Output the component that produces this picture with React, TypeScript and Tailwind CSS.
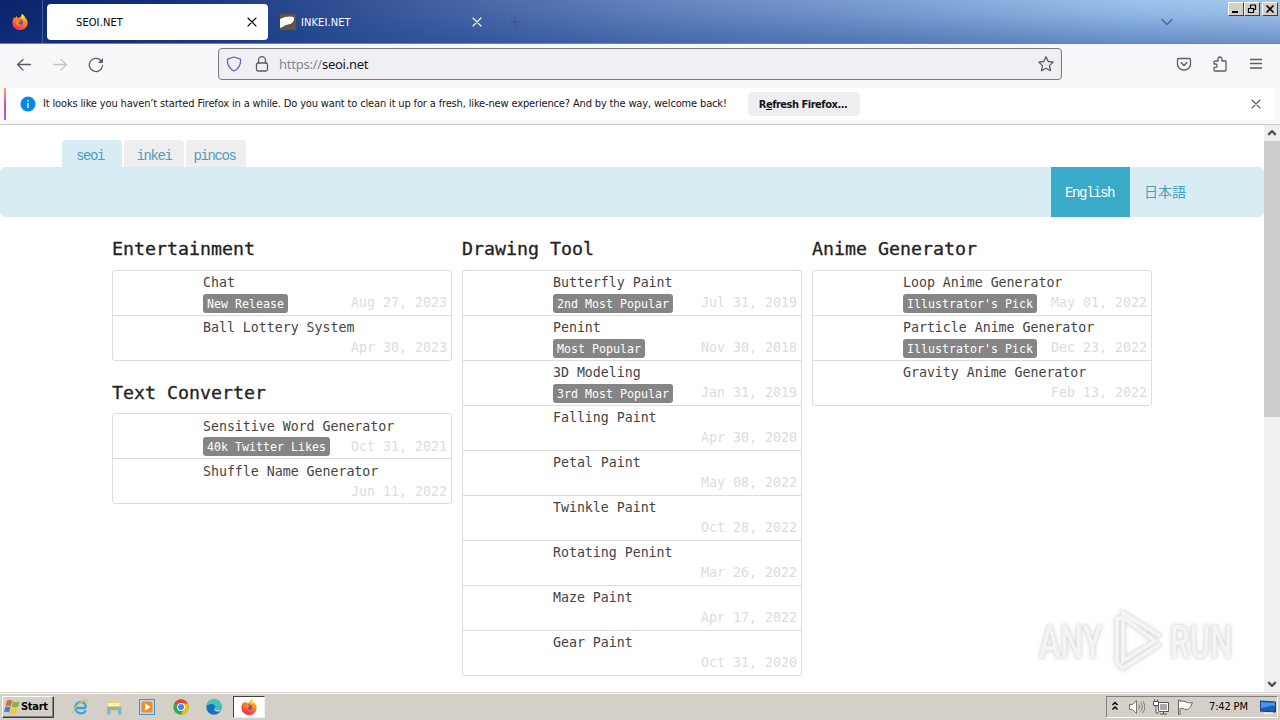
import type { ReactNode } from "react";

type Item = { title: string; date: string; badge?: string };
type Group = { name: string; items: Item[] };

const columns: Group[][] = [
  [
    {
      name: "Entertainment",
      items: [
        { title: "Chat", date: "Aug 27, 2023", badge: "New Release" },
        { title: "Ball Lottery System", date: "Apr 30, 2023" },
      ],
    },
    {
      name: "Text Converter",
      items: [
        { title: "Sensitive Word Generator", date: "Oct 31, 2021", badge: "40k Twitter Likes" },
        { title: "Shuffle Name Generator", date: "Jun 11, 2022" },
      ],
    },
  ],
  [
    {
      name: "Drawing Tool",
      items: [
        { title: "Butterfly Paint", date: "Jul 31, 2019", badge: "2nd Most Popular" },
        { title: "Penint", date: "Nov 30, 2018", badge: "Most Popular" },
        { title: "3D Modeling", date: "Jan 31, 2019", badge: "3rd Most Popular" },
        { title: "Falling Paint", date: "Apr 30, 2020" },
        { title: "Petal Paint", date: "May 08, 2022" },
        { title: "Twinkle Paint", date: "Oct 28, 2022" },
        { title: "Rotating Penint", date: "Mar 26, 2022" },
        { title: "Maze Paint", date: "Apr 17, 2022" },
        { title: "Gear Paint", date: "Oct 31, 2020" },
      ],
    },
  ],
  [
    {
      name: "Anime Generator",
      items: [
        { title: "Loop Anime Generator", date: "May 01, 2022", badge: "Illustrator's Pick" },
        { title: "Particle Anime Generator", date: "Dec 23, 2022", badge: "Illustrator's Pick" },
        { title: "Gravity Anime Generator", date: "Feb 13, 2022" },
      ],
    },
  ],
];

const Icon = ({ children, className = "" }: { children: ReactNode; className?: string }) => (
  <svg
    viewBox="0 0 16 16"
    className={`w-4 h-4 shrink-0 ${className}`}
    fill="none"
    stroke="currentColor"
    strokeWidth="1.3"
    strokeLinecap="round"
    strokeLinejoin="round"
  >
    {children}
  </svg>
);

const CloseIcon = ({ className }: { className?: string }) => (
  <Icon className={className}>
    <path d="M4 4l8 8M12 4l-8 8" strokeWidth="1.100" />
  </Icon>
);

const FirefoxLogo = () => (
  <svg viewBox="0 0 16 16" className="w-4 h-4 shrink-0">
    <defs>
      <linearGradient id="fox" x1="0.8" y1="0" x2="0.3" y2="1">
        <stop offset="0" stopColor="#ffe226" />
        <stop offset="0.4" stopColor="#ff8a16" />
        <stop offset="1" stopColor="#f5246a" />
      </linearGradient>
    </defs>
    <path
      d="M10 0c2 1.500 2.500 2.600 3 3.700 1 .5 2.700 2.300 2.700 5A7.600 7.300 0 0 1 .4 8.700C.4 6.300 1.300 4.500 2.500 3l.5 1.300C3.500 3.200 4.200 2.400 5 2c0 .8.300 1.600.8 2C7.500 3.800 9.600 2.800 10 0z"
      fill="url(#fox)"
    />
    <circle cx="8.200" cy="8.300" r="2.700" fill="#7a45c0" />
    <path d="M3.500 5.500c1.500-.8 3-.3 4 .7 1.300.1 1.700.8 1.200 1.300-.8.600-2 .4-2.200 1.500 0 1 1.200 1.800 2.600 1.500-1.500 1.500-4.600 1-5.400-1.400z" fill="#ff8a16" />
    <path d="M10 0c2 1.500 2.500 2.600 3 3.700l-2.500 1.600C9.500 4 9.500 2 10 0z" fill="#ffd936" />
  </svg>
);

const CaptionButton = ({ children }: { children: ReactNode }) => (
  <div className="w-4 h-[14px] bg-[#d4d0c8] border border-t-white border-l-white border-r-[#404040] border-b-[#404040]">
    <svg viewBox="0 0 14 12" className="w-[14px] h-3" fill="none" stroke="#000">
      {children}
    </svg>
  </div>
);

const TitleBar = () => (
  <div className="relative h-11 flex items-center border-b border-[#7c7f8e] text-[11px] font-['DejaVu_Sans_Condensed','DejaVu_Sans',sans-serif] bg-[linear-gradient(to_bottom,transparent_0%,rgba(20,56,136,0.08)_30%,rgba(20,60,140,0.4)_100%),linear-gradient(97deg,#0a246a_0%,#12307a_12%,#3d5d9e_32%,#6282bc_50%,#7ea1d4_70%,#9bc2ec_88%,#a6caf0_100%)]">
    <div className="w-[43px] h-full flex items-center pl-3 border-r border-[#42588f]">
      <FirefoxLogo />
    </div>
    <div className="ml-1 w-[221px] h-9 bg-white rounded flex items-center pl-[29px] pr-2 text-black">
      <span className="grow pt-[3px] tracking-[0.1px]">SEOI.NET</span>
      <CloseIcon />
    </div>
    <div className="ml-3 w-[205px] flex items-center text-white">
      <svg viewBox="0 0 16 16" className="w-4 h-4 mr-[5px]">
        <path d="M0 0h16v16H0z" fill="#66543f" />
        <path d="M0 5c5-3 11-3 13.500-2C15 5 13.500 9 10 10c-3 1-5 .5-6.500 2.500L0 14z" fill="#fff" />
      </svg>
      <span className="grow pt-[3px] tracking-[0.1px]">INKEI.NET</span>
      <CloseIcon />
    </div>
    <Icon className="ml-[22px] text-[#425071] opacity-70">
      <path d="M8 4v8M4 8h8" />
    </Icon>
    <Icon className="ml-auto mr-[105px] text-[#4c6798]">
      <path d="M3 5.500l5 5 5-5" strokeWidth="1.600" />
    </Icon>
    <div className="absolute top-[2px] right-[2px] flex">
      <CaptionButton>
        <path d="M3 9h6" strokeWidth="2" />
      </CaptionButton>
      <CaptionButton>
        <path d="M5 2h6M5.500 2v3M10.500 2v5M3 5.500h6M3.500 5v5M8.500 5v5M3 9.500h6M9 6.500h2" strokeWidth="1.200" />
      </CaptionButton>
      <div className="ml-[2px]">
        <CaptionButton>
          <path d="M3.500 2.500l7 7M10.500 2.500l-7 7" strokeWidth="1.600" />
        </CaptionButton>
      </div>
    </div>
  </div>
);

const ToolBar = () => (
  <div className="h-11 bg-[#f8f8fb] flex items-start text-[#5b5b66]">
    <div className="flex gap-5 pt-[13px] pl-4 w-[218px]">
      <Icon>
        <path d="M14.500 7.500H1.500M7 2.500L1.500 7.500 7 13" />
      </Icon>
      <Icon className="text-[#c4c4ca]">
        <path d="M1.500 7.500h13M9 2.500l5.500 5-5.500 5.500" />
      </Icon>
      <Icon>
        <path d="M14.500 8.500A6.600 6.600 0 1 1 12.600 3.300" />
        <path d="M15 1v5h-5z" fill="currentColor" stroke="none" />
      </Icon>
    </div>
    <div className="mt-1 w-[844px] h-8 border border-[#77777f] rounded bg-[#f0f0f4] flex items-center px-[7px]">
      <Icon className="text-[#6a5fc6]">
        <path d="M8 1l6.500 2.200c.5 5-1.500 9.300-6.500 11.800C3 12.500 1 8.200 1.500 3.200z" />
      </Icon>
      <Icon className="ml-3">
        <path d="M4.500 7V4.200a3.500 3.500 0 0 1 7 0V7" />
        <rect x="2.500" y="7" width="11" height="8" rx="1.500" />
      </Icon>
      <span className="ml-[9px] pt-[2px] grow font-['Noto_Sans',sans-serif] text-[13px] tracking-[-0.24px] text-[#85858d]">
        https://<span className="text-[#15141a]">seoi.net</span>
      </span>
      <Icon>
        <path d="M8 .8l2.200 4.700 5 .6-3.700 3.500 1 5.100L8 12.200l-4.500 2.500 1-5.100L.8 6.100l5-.6z" />
      </Icon>
    </div>
    <div className="ml-auto mr-4 pt-3 flex gap-5">
      <Icon>
        <path d="M2.500 2.500h11a1 1 0 0 1 1 1V8a6.500 6 0 0 1-13 0V3.500a1 1 0 0 1 1-1z" />
        <path d="M5 6.500l3 3 3-3" />
      </Icon>
      <Icon>
        <path d="M3.500 15h9.500a1 1 0 0 0 1-1V5h-4V3a2 2 0 0 0-4 0v2H3a1 1 0 0 0-1 1v2h1.500a1.600 1.600 0 0 1 0 3.300H2V14a1 1 0 0 0 1 1z" />
      </Icon>
      <Icon>
        <path d="M2 3.500h12M2 7.500h12M2 12h12" strokeLinecap="butt" />
      </Icon>
    </div>
  </div>
);

const Notification = () => (
  <div className="h-[37px] bg-[#f8f8fb] border-b border-[#cccccc] pl-1 pr-[5px]">
    <div className="h-8 bg-white rounded-r flex items-center font-['DejaVu_Sans_Condensed','DejaVu_Sans',sans-serif] text-[11px] text-[#15141a]">
      <div className="w-[2px] h-full bg-linear-to-b from-[#ff9a6b] via-[#e0459b] to-[#9059ff]" />
      <svg viewBox="0 0 16 16" className="ml-[14px] w-4 h-4">
        <circle cx="8" cy="8" r="7.500" fill="#0488e6" />
        <path d="M8 7v5M8 4v1.500" stroke="#fff" strokeWidth="1.300" />
      </svg>
      <span className="ml-[7px] w-[705px] whitespace-nowrap tracking-[-0.15px]">
        It looks like you haven’t started Firefox in a while. Do you want to clean it up for a fresh, like-new experience? And by the way, welcome back!
      </span>
      <button className="w-28 h-6 rounded bg-[#eeeef0] font-bold tracking-[-0.48px] whitespace-nowrap pt-[2px] pr-[2px]">
        R<span className="underline">e</span>fresh Firefox...
      </button>
      <CloseIcon className="ml-auto mr-[11px] text-[#5b5b66]" />
    </div>
  </div>
);

const SiteHeader = () => (
  <div className="pt-[15px] font-['Liberation_Mono','Noto_Sans_CJK_JP',monospace] text-sm tracking-[-1.4px] text-[#4a9fbd]">
    <div className="flex gap-[2px] pl-[62px] h-[27px] text-center leading-[33px]">
      <div className="w-[60px] rounded-t bg-[#d7edf3] pr-1">seoi</div>
      <div className="w-[60px] rounded-t bg-[#eeeeee]">inkei</div>
      <div className="w-[60px] rounded-t bg-[#eeeeee] pr-[3px]">pincos</div>
    </div>
    <div className="h-[50px] rounded-[5px] bg-[#d7edf3] flex justify-end pr-[77px] leading-[52px]">
      <div className="w-[79px] h-full bg-[#39aac8] text-white pl-[14px]">English</div>
      <div className="pl-[14px] w-[57px] tracking-normal whitespace-nowrap">日本語</div>
    </div>
  </div>
);

const Section = ({ group }: { group: Group }) => (
  <section className="group">
    <h2 className="h-[52px] leading-[62px] group-last:group-not-first:leading-[64px] text-[18.3px] text-[#222] whitespace-nowrap [-webkit-text-stroke:0.3px]">{group.name}</h2>
    <ul className="border border-[#dddddd] rounded-[3px] divide-y divide-[#dddddd]">
      {group.items.map((item, i) => (
        <li key={item.title} className={i === group.items.length - 1 ? "h-11 pl-[90px] pr-1" : "h-[45px] pl-[90px] pr-1"}>
          <div className="h-[23px] leading-6 group-last:group-not-first:leading-[26px] text-[13.29px] tracking-[-0.03px] text-[#444]">{item.title}</div>
          <div className="flex items-start justify-between">
            {item.badge ? (
              <span className="h-[19px] px-1 rounded-[3px] bg-[#858585] text-white text-[11.63px] leading-[21px] group-last:group-not-first:leading-[20px] whitespace-nowrap">
                {item.badge}
              </span>
            ) : (
              <span />
            )}
            <span className="text-[13.29px] leading-[17px] group-last:group-not-first:leading-[19px] text-[#dcdcdc] whitespace-nowrap">{item.date}</span>
          </div>
        </li>
      ))}
    </ul>
  </section>
);

const ScrollBar = () => (
  <div className="w-4 bg-[#f0f0f0] flex flex-col text-[#505050]">
    <Icon className="p-[2px]">
      <path d="M3 10.500l5-5 5 5" strokeWidth="3" strokeLinecap="butt" />
    </Icon>
    <div className="h-[276px] bg-[#cdcdcd]" />
    <Icon className="mt-auto p-[2px]">
      <path d="M3 5.500l5 5 5-5" strokeWidth="3" strokeLinecap="butt" />
    </Icon>
  </div>
);

const Watermark = () => (
  <div className="absolute right-[48px] bottom-[19px] flex items-center gap-[5px] font-['Roboto',sans-serif] font-medium text-[46px] leading-none text-[#f4f4f4] [filter:drop-shadow(0_0_1px_#dadada)_drop-shadow(0_0_2px_#dddddd)]">
    <span className="w-[65px] pt-[2px] whitespace-nowrap"><span className="inline-block origin-left scale-x-[0.7]">ANY</span></span>
    <svg viewBox="0 0 56 64" className="w-14 h-16" fill="none" stroke="currentColor" strokeWidth="4">
      <path d="M8 50V10l6-2v44l32-20L14 8V4l37 23M51 35L14 59l-6-5v-6" />
    </svg>
    <span className="w-[62px] pt-[2px] whitespace-nowrap"><span className="inline-block origin-left scale-x-[0.68]">RUN</span></span>
  </div>
);

const TaskBar = () => (
  <div className="h-7 bg-[#d4d0c8] border-t border-[#d4d0c8] shadow-[inset_0_1px_0_#ffffff] flex items-center pt-[1px] font-['DejaVu_Sans_Condensed','DejaVu_Sans',sans-serif] text-[11px] text-black">
    <div className="ml-[2px] w-[52px] h-[22px] border border-t-white border-l-white border-r-[#404040] border-b-[#404040] shadow-[inset_-1px_-1px_0_#808080] flex items-center font-bold tracking-[-0.3px] pl-[1px] whitespace-nowrap">
      <svg viewBox="0 0 16 16" className="w-4 h-4 shrink-0">
        <path d="M3 1.500c2.300-1 4-.6 5.300.3L6.800 7.300c-1.700-.9-3.300-1-5.300-.1z" fill="#e8622c" />
        <path d="M9 2.300c2.200 1.200 4 1.100 6.500 0L14 7.800c-2.300 1-4 1-6.300 0z" fill="#79b93c" />
        <path d="M1.300 8c2-.9 3.500-.7 5.200.2l-1.500 5.300c-1.700-.9-3.300-1-5-.2z" fill="#3e83cf" />
        <path d="M7.300 8.700c2.200 1.100 4 1.100 6.300.1l-1.500 5.400c-2.300 1-4.200 1-6.300-.1z" fill="#f6c52f" />
      </svg>
      <span className="ml-[1px]">Start</span>
    </div>
    <div className="ml-[18px] flex items-center gap-[17.500px]">
      <svg viewBox="0 0 16 16" className="w-4 h-4" fill="none">
        <path d="M13.800 9H4.200M13.800 9c.3-3.600-1.800-6-5-6-3 0-5.500 2.200-5.500 5.500 0 3.400 2.500 5.800 5.500 5.800 2.400 0 4.200-1 5-2.900" stroke="#35a5df" strokeWidth="2.300" />
        <path d="M1.500 14.500C.3 11 7.500 2 14 1c1.500 0 1.300 1 .8 2.500" stroke="#e9bd47" strokeWidth="1.300" />
      </svg>
      <svg viewBox="0 0 16 16" className="w-4 h-4">
        <path d="M1 1.500h5L7 3h7.500v10H1z" fill="#efcf6c" />
        <path d="M2 4h11.500v3H2z" fill="#fff4ba" />
        <path d="M1 8h14.500v7.500H12V11H4.500v4.500H1z" fill="#78b8db" />
      </svg>
      <svg viewBox="0 0 16 16" className="w-4 h-4">
        <rect x=".5" y=".5" width="15" height="15" fill="#b9d8f1" stroke="#4e8fc9" />
        <rect x="2.500" y="2.500" width="11" height="11" rx="2" fill="#f28b1c" />
        <path d="M6 4.300l5.500 3.700L6 11.700z" fill="#fff" />
      </svg>
      <svg viewBox="0 0 16 16" className="w-4 h-4">
        <circle cx="8" cy="8" r="7.700" fill="#33a852" />
        <path d="M8 8L1.500 4.200A7.700 7.700 0 0 1 14.700 4.500H8z" fill="#e94235" />
        <path d="M8 4.500h6.700A7.700 7.700 0 0 1 8 15.700l3.200-5.900z" fill="#fbbc05" />
        <circle cx="8" cy="8" r="3.900" fill="#fff" />
        <circle cx="8" cy="8" r="3" fill="#4285f4" />
      </svg>
      <svg viewBox="0 0 16 16" className="w-4 h-4">
        <circle cx="8" cy="8" r="7.700" fill="#1471c5" />
        <path d="M.4 7.500C.8 3 4 .3 8 .3c4.500 0 7.700 3 7.700 6.700 0 2.500-2 4-4.500 4-1.700 0-2.500-.8-2-1.600C10 7 8 5 5.500 5 3 5 1.200 6 .4 7.500z" fill="#43c7b5" />
        <path d="M9.300 9.300c-.6 1 .4 1.800 2 1.800 1.500 0 3-.5 4.100-1.500-.5 1.200-1.200 2.100-2 2.800-2.500.5-5-.3-5.400-2.400z" fill="#d4d0c8" />
      </svg>
    </div>
    <div className="ml-[11px] w-8 h-[22px] bg-white border border-t-[#404040] border-l-[#404040] border-r-[#f4f2ee] border-b-[#f4f2ee] flex items-center justify-center">
      <FirefoxLogo />
    </div>
    <div className="ml-auto mr-[2px] w-[172px] h-[22px] border border-t-[#808080] border-l-[#808080] border-r-white border-b-white flex items-center">
      <Icon className="text-black">
        <path d="M5.500 6L8 3.500 10.500 6M5.500 10.500L8 8l2.500 2.500" strokeLinecap="butt" strokeLinejoin="miter" strokeWidth="1.500" />
      </Icon>
      <svg viewBox="0 0 16 16" className="ml-[6px] w-4 h-4" fill="none" stroke="#777">
        <path d="M.5 5.500h3l4-4v13l-4-4h-3z" fill="#fff" />
        <path d="M9.500 5.500c1.200 1.500 1.200 3.500 0 5M11.500 3.500c2.200 2.700 2.200 6.300 0 9M13.500 2c3 3.500 3 8.500 0 12" />
      </svg>
      <svg viewBox="0 0 16 16" className="ml-2 w-4 h-4" fill="none" stroke="#555">
        <path d="M5.500 3.500h10v9h-10zM7 15h7M10.500 12.500V15" fill="#fff" />
        <path d="M7 5h7v6H7z" fill="#a8a8a8" stroke="none" />
        <path d="M.5 2.500h5v4h-5zM1.500.5v2M4.500.5v2M3 6.500V14h3" fill="#fff" />
      </svg>
      <svg viewBox="0 0 16 16" className="ml-2 w-4 h-4" fill="#fff" stroke="#666">
        <path d="M1.500 1v14.500h1.500V9.500c3-1 4 1 6 1 2.500 0 3-1.500 4.500-2.500L15.500 3.500c-2 .5-3.500.5-5.500 0C8 2.500 6 1.500 3 2.500V1z" />
      </svg>
      <span className="ml-[16px] w-[41px] whitespace-nowrap tracking-[-0.15px]">7:42 PM</span>
      <svg viewBox="0 0 16 16" className="ml-[10px] w-4 h-4">
        <path d="M0 2l15.500 1v10L0 12z" fill="#1c5cb7" stroke="#163a72" />
        <path d="M1 3l14 .8v3.200C9 6 6 9 1 9z" fill="#4596e4" />
        <path d="M4 13.500h9v1.500H4z" fill="#e8edf5" />
      </svg>
    </div>
  </div>
);

const App = () => {
  return (
    <div className="w-[1280px] h-[720px] overflow-hidden flex flex-col bg-white">
      <TitleBar />
      <ToolBar />
      <Notification />
      <div className="relative grow min-h-0 flex">
        <main className="grow">
          <SiteHeader />
          <div className="flex gap-[10px] pl-28 pt-[1px] font-['DejaVu_Sans_Mono',monospace]">
            {columns.map((groups) => (
              <div key={groups[0].name} className="w-[340px]">
                {groups.map((group) => (
                  <Section key={group.name} group={group} />
                ))}
              </div>
            ))}
          </div>
        </main>
        <ScrollBar />
        <Watermark />
      </div>
      <TaskBar />
    </div>
  );
};

export default App;
